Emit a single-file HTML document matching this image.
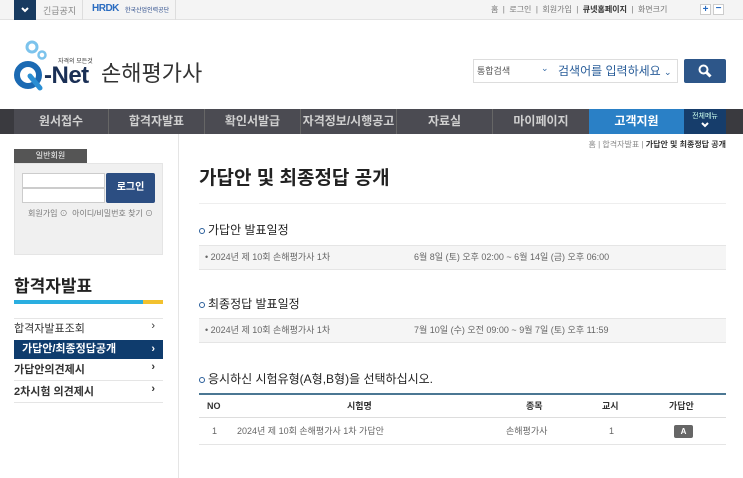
<!DOCTYPE html>
<html><head><meta charset="utf-8"><style>
*{margin:0;padding:0;box-sizing:border-box}
body{width:743px;height:478px;overflow:hidden;background:#fff;font-family:"Liberation Sans","Noto Sans CJK KR",sans-serif;color:#333;position:relative}
.a{position:absolute;white-space:nowrap}
</style></head><body>
<div class="a" style="left:0;top:0;width:743px;height:20px;background:#f4f4f4;border-bottom:1px solid #e2e2e2"></div>
<div class="a" style="left:14px;top:0;width:22px;height:20px;background:#173a60"></div>
<svg class="a" style="left:20px;top:6px" width="10" height="8"><path d="M2 2 L5 5 L8 2" stroke="#fff" stroke-width="2" fill="none"/></svg>
<div class="a" style="left:36px;top:0;width:47px;height:20px;border-right:1px solid #ddd"></div>
<div class="a" style="left:43px;top:4px;font-size:9px;color:#888">긴급공지</div>
<div class="a" style="left:92px;top:3px;font-size:10px;font-weight:bold;color:#2a6cc0;letter-spacing:-0.5px">HRDK</div>
<div class="a" style="left:125px;top:5px;font-size:6px;color:#2a4a8a">한국산업인력공단</div>
<div class="a" style="left:175px;top:0;width:1px;height:20px;background:#ddd"></div>
<div class="a" style="left:491px;top:4px;font-size:8px;color:#777">홈 &nbsp;| &nbsp;로그인 &nbsp;| &nbsp;회원가입 &nbsp;| &nbsp;<b style="color:#333">큐넷홈페이지</b> &nbsp;| &nbsp;화면크기</div>
<div class="a" style="left:700px;top:4px;width:11px;height:11px;background:#fff;border:1px solid #ccc;color:#2a6cc0;font-size:10px;line-height:9px;text-align:center;font-weight:bold">+</div>
<div class="a" style="left:713px;top:4px;width:11px;height:11px;background:#fff;border:1px solid #ccc;color:#2a6cc0;font-size:10px;line-height:8px;text-align:center;font-weight:bold">−</div>
<svg class="a" style="left:12px;top:38px" width="46" height="56"><circle cx="20" cy="9" r="5" fill="none" stroke="#7cc3ec" stroke-width="3"/><circle cx="30" cy="17" r="3.5" fill="none" stroke="#7cc3ec" stroke-width="2.5"/><circle cx="16" cy="37" r="11" fill="none" stroke="#1b6ab3" stroke-width="6"/><path d="M18 38 L28 50" stroke="#2a8fd4" stroke-width="5" stroke-linecap="round"/></svg>
<div class="a" style="left:58px;top:56px;font-size:6px;color:#333">자격의 모든것</div>
<div class="a" style="left:44px;top:62px;font-size:24px;font-weight:bold;color:#1a2f55;letter-spacing:-0.5px">-Net</div>
<div class="a" style="left:101px;top:56px;font-size:22px;color:#333">손해평가사</div>
<div class="a" style="left:473px;top:59px;width:205px;height:24px;border:1px solid #ddd;background:#fff"></div>
<div class="a" style="left:477px;top:64px;font-size:9px;color:#555">통합검색</div>
<div class="a" style="left:541px;top:63px;font-size:9px;color:#3a6ea8">⌄</div>
<div class="a" style="left:558px;top:62px;font-size:12px;color:#2a5e9a">검색어를 입력하세요 <span style="font-size:9px">⌄</span></div>
<div class="a" style="left:684px;top:59px;width:42px;height:24px;background:#2d5689;border-radius:2px"></div>
<svg class="a" style="left:697px;top:63px" width="16" height="16"><circle cx="6.5" cy="6.5" r="4" fill="none" stroke="#fff" stroke-width="2"/><path d="M9.5 9.5 L13.5 13.5" stroke="#fff" stroke-width="3"/></svg>
<div class="a" style="left:0;top:109px;width:743px;height:25px;background:#3a3a3f"></div>
<div class="a" style="left:14px;top:109px;width:670px;height:25px;background:#4b4b52;display:flex;font-size:12px;color:#d0d0d0;font-weight:bold">
<div style="width:95px;text-align:center;line-height:25px;border-right:1px solid #666">원서접수</div>
<div style="width:96px;text-align:center;line-height:25px;border-right:1px solid #666">합격자발표</div>
<div style="width:96px;text-align:center;line-height:25px;border-right:1px solid #666">확인서발급</div>
<div style="width:96px;text-align:center;line-height:25px;border-right:1px solid #666">자격정보/시행공고</div>
<div style="width:96px;text-align:center;line-height:25px;border-right:1px solid #666">자료실</div>
<div style="width:96px;text-align:center;line-height:25px">마이페이지</div>
<div style="width:95px;text-align:center;line-height:25px;background:#2a80c6;color:#fff">고객지원</div></div>
<div class="a" style="left:684px;top:109px;width:42px;height:25px;background:#163d6b;color:#cfe;font-size:7px;text-align:center;padding-top:2px">전체메뉴<br><svg width="10" height="8"><path d="M2 2 L5 5 L8 2" stroke="#fff" stroke-width="2" fill="none"/></svg></div>
<div class="a" style="left:178px;top:134px;width:1px;height:344px;background:#e5e5e5"></div>
<div class="a" style="left:14px;top:149px;width:73px;height:14px;background:#555;color:#fff;font-size:8px;text-align:center;line-height:14px">일반회원</div>
<div class="a" style="left:14px;top:163px;width:149px;height:92px;background:#f0f0f0;border:1px solid #e5e5e5"></div>
<div class="a" style="left:22px;top:173px;width:83px;height:15px;background:#fff;border:1px solid #ccc"></div>
<div class="a" style="left:22px;top:188px;width:83px;height:15px;background:#fff;border:1px solid #ccc"></div>
<div class="a" style="left:106px;top:173px;width:49px;height:30px;background:#2c4e82;border-radius:2px;color:#fff;font-size:10px;font-weight:bold;text-align:center;line-height:30px">로그인</div>
<div class="a" style="left:28px;top:208px;font-size:8px;color:#777">회원가입 ⊙ &nbsp;아이디/비밀번호 찾기 ⊙</div>
<div class="a" style="left:14px;top:272px;font-size:17px;font-weight:bold;color:#222">합격자발표</div>
<div class="a" style="left:14px;top:300px;width:129px;height:4px;background:#2aaee0"></div>
<div class="a" style="left:143px;top:300px;width:20px;height:4px;background:#f2c12e"></div>
<div class="a" style="left:14px;top:318px;width:149px;height:1px;background:#e5e5e5"></div>
<div class="a" style="left:14px;top:320px;width:149px;font-size:11px;color:#333">합격자발표조회<span style="position:absolute;right:8px">›</span></div>
<div class="a" style="left:14px;top:340px;width:149px;height:19px;background:#0f3c6d;color:#fff;font-size:11px;font-weight:bold;padding-left:8px;line-height:19px">가답안/최종정답공개<span style="position:absolute;right:8px">›</span></div>
<div class="a" style="left:14px;top:361px;width:149px;height:20px;border-bottom:1px solid #e5e5e5;font-size:11px;font-weight:bold;color:#333">가답안의견제시<span style="position:absolute;right:8px">›</span></div>
<div class="a" style="left:14px;top:383px;width:149px;height:20px;border-bottom:1px solid #e5e5e5;font-size:11px;font-weight:bold;color:#333">2차시험 의견제시<span style="position:absolute;right:8px">›</span></div>
<div class="a" style="right:17px;top:139px;font-size:8px;color:#888">홈 | 합격자발표 | <b style="color:#333">가답안 및 최종정답 공개</b></div>
<div class="a" style="left:199px;top:163px;font-size:19px;font-weight:bold;color:#222">가답안 및 최종정답 공개</div>
<div class="a" style="left:199px;top:203px;width:527px;height:1px;background:#eee"></div>
<div class="a" style="left:199px;top:221px;font-size:12px;color:#222"><span style="display:inline-block;width:6px;height:6px;border:1.5px solid #2a5e9a;border-radius:50%;margin-right:3px"></span>가답안 발표일정</div>
<div class="a" style="left:199px;top:245px;width:527px;height:25px;background:#f5f5f5;border-top:1px solid #e5e5e5;border-bottom:1px solid #e5e5e5;font-size:9px;color:#666;line-height:23px"><span style="margin-left:6px">• 2024년 제 10회 손해평가사 1차</span><span style="position:absolute;left:215px">6월 8일 (토) 오후 02:00 ~ 6월 14일 (금) 오후 06:00</span></div>
<div class="a" style="left:199px;top:295px;font-size:12px;color:#222"><span style="display:inline-block;width:6px;height:6px;border:1.5px solid #2a5e9a;border-radius:50%;margin-right:3px"></span>최종정답 발표일정</div>
<div class="a" style="left:199px;top:318px;width:527px;height:25px;background:#f5f5f5;border-top:1px solid #e5e5e5;border-bottom:1px solid #e5e5e5;font-size:9px;color:#666;line-height:23px"><span style="margin-left:6px">• 2024년 제 10회 손해평가사 1차</span><span style="position:absolute;left:215px">7월 10일 (수) 오전 09:00 ~ 9월 7일 (토) 오후 11:59</span></div>
<div class="a" style="left:199px;top:370px;font-size:12px;color:#222"><span style="display:inline-block;width:6px;height:6px;border:1.5px solid #2a5e9a;border-radius:50%;margin-right:3px"></span>응시하신 시험유형(A형,B형)을 선택하십시오.</div>
<div class="a" style="left:199px;top:393px;width:527px;height:2px;background:#4b7793"></div>
<div class="a" style="left:199px;top:395px;width:527px;height:23px;border-bottom:1px solid #ddd;font-size:9px;font-weight:bold;color:#333;line-height:22px">
<span style="position:absolute;left:8px">NO</span><span style="position:absolute;left:148px">시험명</span><span style="position:absolute;left:327px">종목</span><span style="position:absolute;left:403px">교시</span><span style="position:absolute;left:470px">가답안</span></div>
<div class="a" style="left:199px;top:418px;width:527px;height:27px;border-bottom:1px solid #e5e5e5;font-size:9px;color:#666;line-height:27px">
<span style="position:absolute;left:13px">1</span><span style="position:absolute;left:38px">2024년 제 10회 손해평가사 1차 가답안</span><span style="position:absolute;left:307px">손해평가사</span><span style="position:absolute;left:410px">1</span><span style="position:absolute;left:475px;top:7px;width:19px;height:13px;background:#666;border-radius:2px;color:#fff;font-weight:bold;font-size:8px;line-height:13px;text-align:center">A</span></div>
</body></html>
